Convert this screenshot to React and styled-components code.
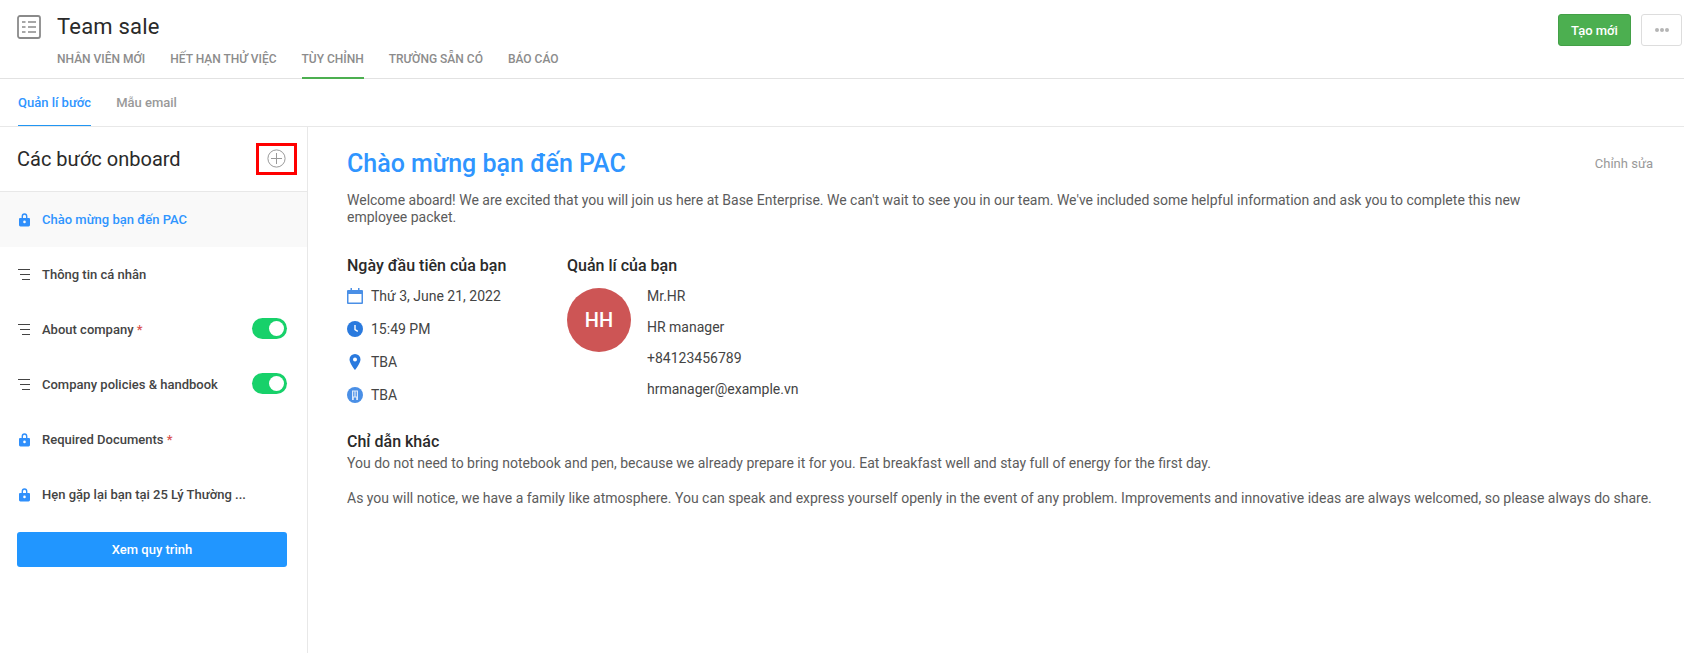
import React from "react";
import styled, { createGlobalStyle } from "styled-components";

const Global = createGlobalStyle`
  html, body { margin: 0; padding: 0; background: #fff; }
  body { font-family: Roboto, "Noto Sans", sans-serif; color: #333; }
  * { box-sizing: border-box; }
`;
const Page = styled.div`width: 1684px; height: 653px; overflow: hidden; display: flex; flex-direction: column;`;
const Header = styled.header`height: 79px; flex: none; border-bottom: 1px solid #e2e2e2; display: flex; padding: 14px 2px 0 17px;`;
const AppIcon = styled.svg`width: 24px; height: 24px; flex: none; margin-top: 1px;`;
const HeadMain = styled.div`margin-left: 16px; flex: 1; display: flex; flex-direction: column;`;
const Title = styled.h1`margin: 0; font-size: 22px; font-weight: 400; line-height: 26px; color: #2a2a2a; letter-spacing: .2px;`;
const Tabs = styled.nav`display: flex; gap: 25px; margin-top: 1px; height: 38px;`;
const Tab = styled.a`font-size: 12px; font-weight: 500; color: #8c8c8c; line-height: 36px; height: 38px; border-bottom: 2px solid ${p => (p.$active ? "#4caf50" : "transparent")};`;
const Actions = styled.div`display: flex; gap: 10px; align-items: flex-start;`;
const CreateBtn = styled.button`width: 73px; height: 32px; background: #4caf50; border: 1px solid #43a047; border-radius: 3px; color: #fff; font: 500 13px Roboto, sans-serif;`;
const MoreBtn = styled.button`width: 41px; height: 32px; background: #fff; border: 1px solid #ddd; border-radius: 3px; display: flex; align-items: center; justify-content: center; gap: 1px; padding: 0;`;
const Dot = styled.span`width: 4px; height: 4px; border-radius: 50%; background: #b5b5b5;`;
const SubBar = styled.div`height: 48px; flex: none; border-bottom: 1px solid #e8e8e8; display: flex; gap: 25px; padding-left: 18px;`;
const SubTab = styled.a`font-size: 13px; font-weight: 500; line-height: 48px; height: 47px; color: ${p => (p.$active ? "#2f95ff" : "#999")}; border-bottom: 1px solid ${p => (p.$active ? "#2196f3" : "transparent")};`;
const Body = styled.div`flex: 1; display: flex; min-height: 0;`;
const Side = styled.aside`width: 308px; flex: none; border-right: 1px solid #e8e8e8;`;
const SideHead = styled.div`height: 65px; border-bottom: 1px solid #e8e8e8; display: flex; align-items: center; justify-content: space-between; padding: 0 10px 0 17px;`;
const SideTitle = styled.h2`margin: 0; font-size: 20px; font-weight: 400; color: #2a2a2a;`;
const AddBox = styled.button`width: 41px; height: 32px; border: 3px solid #f00; background: #fff; padding: 0 0 1px; display: flex; align-items: center; justify-content: center;`;
const Item = styled.div`height: 55px; display: flex; align-items: center; padding: 0 20px 0 17px; background: ${p => (p.$active ? "#f9f9f9" : "#fff")};`;
const ItemIcon = styled.span`width: 25px; flex: none; display: flex; align-items: center; padding-left: 1px;`;
const ItemText = styled.span`flex: 1; font-size: 13px; font-weight: 500; white-space: nowrap; color: ${p => (p.$active ? "#2f95ff" : "#444")};`;
const Star = styled.span`color: #d9534f;`;
const Toggle = styled.span`width: 35px; height: 21px; border-radius: 11px; background: #17d16a; display: flex; justify-content: flex-end; align-items: center; padding-right: 3px; margin-top: -2px;`;
const Knob = styled.span`width: 15px; height: 15px; border-radius: 50%; background: #fff;`;
const ViewBtnWrap = styled.div`padding: 10px 20px 0 17px;`;
const ViewBtn = styled.button`width: 100%; height: 35px; background: #2196ff; color: #fff; border: 0; border-radius: 3px; font: 500 13px Roboto, sans-serif;`;
const Main = styled.main`flex: 1; padding: 20px 30px 0 39px;`;
const MainHead = styled.div`display: flex; justify-content: space-between; align-items: center; height: 32px;`;
const MainTitle = styled.h2`margin: 0; font-size: 25px; font-weight: 500; color: #2f95ff;`;
const EditLink = styled.a`font-size: 13px; color: #999; margin-right: 1px;`;
const Para = styled.p`margin: ${p => p.$m || "0"}; font-size: 14px; line-height: 17px; color: #5c5c5c; max-width: ${p => p.$w || "none"}; white-space: ${p => (p.$nw ? "nowrap" : "normal")};`;
const Columns = styled.div`display: flex; margin-top: 30px;`;
const DayCol = styled.section`width: 220px; flex: none;`;
const SecTitle = styled.h3`margin: 0; font-size: 16px; line-height: 20px; font-weight: 500; color: #2a2a2a;`;
const InfoRow = styled.div`height: 33px; display: flex; align-items: center; font-size: 14px; color: #444;`;
const InfoList = styled.div`margin-top: 3px;`;
const InfoIcon = styled.svg`width: 16px; height: 16px; margin-right: 8px; flex: none; color: #2a7ade;`;
const MgrBody = styled.div`display: flex; margin-top: 5px;`;
const Avatar = styled.div`width: 64px; height: 64px; border-radius: 50%; background: #cd5555; color: #fff; font-size: 20px; font-weight: 500; display: flex; align-items: center; justify-content: center; margin-top: 7px;`;
const MgrInfo = styled.div`margin-left: 16px;`;
const MgrLine = styled.div`height: 31px; line-height: 31px; font-size: 14px; color: #444;`;
const Note = styled.h3`margin: 21px 0 3px; font-size: 16px; line-height: 20px; font-weight: 500; color: #2a2a2a;`;

const Lock = () => (
  <svg width="13" height="15" viewBox="0 0 13 15"><path fill="#2f8ffb" d="M3.6 6V4.2a2.9 2.9 0 0 1 5.8 0V6H11a1 1 0 0 1 1 1v6a1.4 1.4 0 0 1-1.4 1.4H2.4A1.4 1.4 0 0 1 1 13V7a1 1 0 0 1 1-1zm1.4 0h3V4.2a1.5 1.5 0 0 0-3 0zM6.5 8.6a1.3 1.3 0 1 0 0 2.6 1.3 1.3 0 0 0 0-2.6z" fillRule="evenodd" /></svg>
);
const Drag = () => (
  <svg width="13" height="13" viewBox="0 0 13 13"><path stroke="#444" strokeWidth="1" d="M0 1.5h12M2 6.5h10M4 11.5h8" /></svg>
);
const steps = [
  { icon: "lock", text: "Chào mừng bạn đến PAC", active: true },
  { icon: "drag", text: "Thông tin cá nhân" },
  { icon: "drag", text: "About company", star: true, toggle: true },
  { icon: "drag", text: "Company policies & handbook", toggle: true },
  { icon: "lock", text: "Required Documents", star: true },
  { icon: "lock", text: "Hẹn gặp lại bạn tại 25 Lý Thường ..." },
];

export default function App() {
  return (
    <Page>
      <Global />
      <Header>
        <AppIcon viewBox="0 0 24 24" fill="none" stroke="#8a8a8a">
          <rect x="1" y="1" width="22" height="22" rx="2" strokeWidth="1.8" />
          <path strokeWidth="1.6" d="M5 7h3.500M11 7h8M5 12h3.500M11 12h8M5 17h3.500M11 17h8" />
        </AppIcon>
        <HeadMain>
          <Title>Team sale</Title>
          <Tabs>
            <Tab>NHÂN VIÊN MỚI</Tab>
            <Tab>HẾT HẠN THỬ VIỆC</Tab>
            <Tab $active>TÙY CHỈNH</Tab>
            <Tab>TRƯỜNG SẴN CÓ</Tab>
            <Tab>BÁO CÁO</Tab>
          </Tabs>
        </HeadMain>
        <Actions>
          <CreateBtn>Tạo mới</CreateBtn>
          <MoreBtn><Dot /><Dot /><Dot /></MoreBtn>
        </Actions>
      </Header>
      <SubBar>
        <SubTab $active>Quản lí bước</SubTab>
        <SubTab>Mẫu email</SubTab>
      </SubBar>
      <Body>
        <Side>
          <SideHead>
            <SideTitle>Các bước onboard</SideTitle>
            <AddBox>
              <svg width="19" height="19" viewBox="0 0 19 19" fill="none" stroke="#999"><circle cx="9.5" cy="9.5" r="8.6" strokeWidth="1" /><path strokeWidth="1" d="M9.5 4v11M4 9.5h11" /></svg>
            </AddBox>
          </SideHead>
          {steps.map(s => (
            <Item key={s.text} $active={s.active}>
              <ItemIcon>{s.icon === "lock" ? <Lock /> : <Drag />}</ItemIcon>
              <ItemText $active={s.active}>{s.text}{s.star && <Star> *</Star>}</ItemText>
              {s.toggle && <Toggle><Knob /></Toggle>}
            </Item>
          ))}
          <ViewBtnWrap><ViewBtn>Xem quy trình</ViewBtn></ViewBtnWrap>
        </Side>
        <Main>
          <MainHead>
            <MainTitle>Chào mừng bạn đến PAC</MainTitle>
            <EditLink>Chỉnh sửa</EditLink>
          </MainHead>
          <Para $m="13px 0 0" $w="1210px">Welcome aboard! We are excited that you will join us here at Base Enterprise. We can't wait to see you in our team. We've included some helpful information and ask you to complete this new employee packet.</Para>
          <Columns>
            <DayCol>
              <SecTitle>Ngày đầu tiên của bạn</SecTitle>
              <InfoList>
                <InfoRow>
                  <InfoIcon viewBox="0 0 16 16"><path fill="#4a8fe6" fillRule="evenodd" d="M3.500 0H5v2h6V0h1.500v2H15a1 1 0 0 1 1 1v12a1 1 0 0 1-1 1H1a1 1 0 0 1-1-1V3a1 1 0 0 1 1-1h2.500zM1.500 6v8.500h13V6z" /></InfoIcon>
                  Thứ 3, June 21, 2022
                </InfoRow>
                <InfoRow>
                  <InfoIcon viewBox="0 0 16 16"><circle cx="8" cy="8" r="8" fill="currentColor" /><path d="M8 4v4.500l2.800 1.800" stroke="#fff" strokeWidth="1.400" fill="none" /></InfoIcon>
                  15:49 PM
                </InfoRow>
                <InfoRow>
                  <InfoIcon viewBox="0 0 16 16"><path fill="currentColor" fillRule="evenodd" d="M8 0a5.500 5.500 0 0 1 5.500 5.500C13.500 9.500 8 16 8 16S2.500 9.500 2.500 5.500A5.500 5.500 0 0 1 8 0zm0 3.500a2 2 0 1 0 0 4 2 2 0 0 0 0-4z" /></InfoIcon>
                  TBA
                </InfoRow>
                <InfoRow>
                  <InfoIcon viewBox="0 0 16 16"><circle cx="8" cy="8" r="8" fill="#4a8fe6" /><path fill="#dfeafa" d="M5 3.500h6V13H9.200v-2.500H6.800V13H5z" /><path stroke="#4a8fe6" strokeWidth=".8" d="M6.500 4.500v5M8 4.500v5M9.500 4.500v5" /></InfoIcon>
                  TBA
                </InfoRow>
              </InfoList>
            </DayCol>
            <section>
              <SecTitle>Quản lí của bạn</SecTitle>
              <MgrBody>
                <Avatar>HH</Avatar>
                <MgrInfo>
                  <MgrLine>Mr.HR</MgrLine>
                  <MgrLine>HR manager</MgrLine>
                  <MgrLine>+84123456789</MgrLine>
                  <MgrLine>hrmanager@example.vn</MgrLine>
                </MgrInfo>
              </MgrBody>
            </section>
          </Columns>
          <Note>Chỉ dẫn khác</Note>
          <Para $nw>You do not need to bring notebook and pen, because we already prepare it for you. Eat breakfast well and stay full of energy for the first day.</Para>
          <Para $m="18px 0 0" $nw>As you will notice, we have a family like atmosphere. You can speak and express yourself openly in the event of any problem. Improvements and innovative ideas are always welcomed, so please always do share.</Para>
        </Main>
      </Body>
    </Page>
  );
}
